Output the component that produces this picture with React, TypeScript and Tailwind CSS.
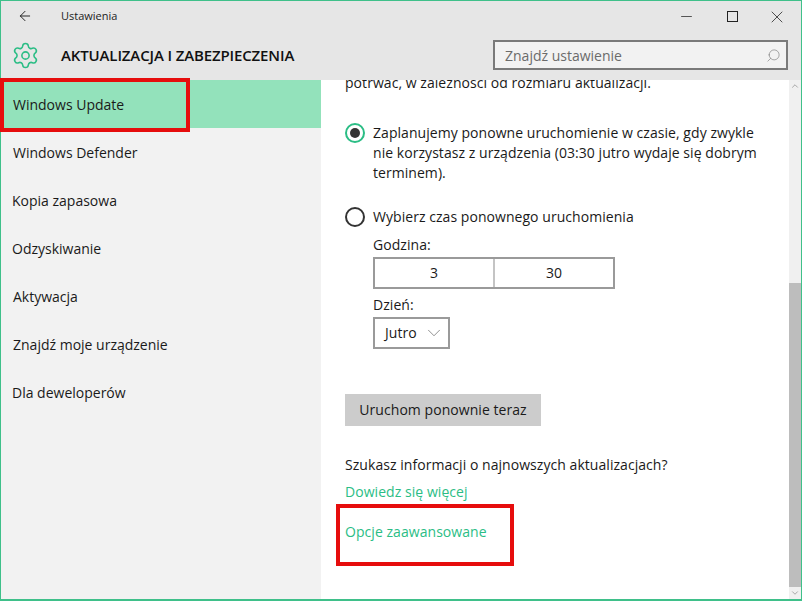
import { ArrowLeft, ChevronDown, ChevronUp, Minus, Search, Settings, X } from "lucide-react";

const menu = [
  { name: "Windows Update", active: true, pad: "pl-3" },
  { name: "Windows Defender", active: false, pad: "pl-3" },
  { name: "Kopia zapasowa", active: false, pad: "pl-[11px]" },
  { name: "Odzyskiwanie", active: false, pad: "pl-[11px]" },
  { name: "Aktywacja", active: false, pad: "pl-3" },
  { name: "Znajdź moje urządzenie", active: false, pad: "pl-3" },
  { name: "Dla deweloperów", active: false, pad: "pl-[11px]" },
];

export default function App() {
  return (
    <div className="relative w-[802px] h-[602px] overflow-hidden bg-white font-['Open_Sans','Noto_Sans',sans-serif] text-[14px] text-[#1a1a1a]">
      <div className="flex flex-col h-[601px] border border-[#3fc08a] border-b-2">
        {/* top bar */}
        <div className="h-[79px] shrink-0 bg-[#e6e6e6] flex flex-col">
          <div className="h-[31px] flex items-center">
            <div className="w-[60px] pl-4 shrink-0 mb-[1px]">
              <ArrowLeft size={16} strokeWidth={1.4} />
            </div>
            <span className="text-[11px] text-[#222]">Ustawienia</span>
            <div className="ml-auto flex items-center">
              <div className="w-[46px] flex justify-center"><Minus size={17} strokeWidth={1} /></div>
              <div className="w-[46px] flex justify-center"><div className="w-[11px] h-[11px] border border-[#222]" /></div>
              <div className="w-[46px] flex justify-center pr-[2px]"><X size={20} strokeWidth={0.9} /></div>
            </div>
          </div>
          <div className="flex items-center h-[48px] pb-[1px]">
            <div className="w-[60px] pl-[10px] shrink-0 text-[#2bbd85]">
              <Settings size={29} strokeWidth={1.3} />
            </div>
            <span className="text-[15px] font-semibold tracking-[-0.13px] text-[#111]">AKTUALIZACJA I ZABEZPIECZENIA</span>
            <div className="ml-auto mr-[13px] mb-[1px] w-[295px] h-[30px] border-2 border-[#7a7a7a] bg-[#f2f2f2] flex items-center pl-[10px] pr-[5px]">
              <span className="text-[14px] text-[#6b6b6b]">Znajdź ustawienie</span>
              <Search size={15} strokeWidth={1} className="ml-auto text-[#777] -scale-x-100" />
            </div>
          </div>
        </div>

        <div className="flex flex-1 min-h-0">
          {/* sidebar */}
          <div className="w-[320px] shrink-0 bg-[#f2f2f2]">
            {menu.map((item) => (
              <div
                key={item.name}
                className={`h-12 flex items-center ${item.pad} ${item.active ? "bg-[#93e2bb]" : ""}`}
              >
                {item.name}
              </div>
            ))}
          </div>

          {/* content */}
          <div className="flex-1 min-w-0 overflow-hidden pl-6 pr-8 relative">
            <div className="-mt-[7px] leading-5 tracking-[0.05px]">
              <p>potrwać, w zależności od rozmiaru aktualizacji.</p>

              <div className="flex mt-[30px]">
                <div className="w-5 h-5 rounded-full border-2 border-[#2bbd85] flex items-center justify-center shrink-0">
                  <div className="w-[10px] h-[10px] rounded-full bg-[#333]" />
                </div>
                <p className="ml-[8px] w-[400px]">
                  Zaplanujemy ponowne uruchomienie w czasie, gdy zwykle nie korzystasz z urządzenia (03:30 jutro wydaje się dobrym terminem).
                </p>
              </div>

              <div className="flex mt-6">
                <div className="w-5 h-5 rounded-full border-2 border-[#333] shrink-0" />
                <p className="ml-[8px]">Wybierz czas ponownego uruchomienia</p>
              </div>

              <div className="ml-7">
                <p className="mt-[8px]">Godzina:</p>
                <div className="mt-[2px] w-[242px] h-8 border-2 border-[#9a9a9a] flex">
                  <div className="w-[120px] border-r-2 border-[#c4c4c4] flex items-center justify-center">3</div>
                  <div className="flex-1 flex items-center justify-center">30</div>
                </div>
                <p className="mt-[6px]">Dzień:</p>
                <div className="mt-[2px] w-[77px] h-8 border-2 border-[#9a9a9a] flex items-center pl-[10px]">
                  <span>Jutro</span>
                  <ChevronDown size={22} strokeWidth={0.7} className="ml-[6px] text-[#555]" />
                </div>
              </div>

              <div className="mt-[45px] w-[196px] h-8 bg-[#cccccc] flex items-center justify-center">
                Uruchom ponownie teraz
              </div>

              <p className="mt-[29px]">Szukasz informacji o najnowszych aktualizacjach?</p>
              <p className="mt-[7px] text-[#2bbd85]">Dowiedz się więcej</p>
              <p className="mt-5 text-[#2bbd85]">Opcje zaawansowane</p>
            </div>

            {/* scrollbar */}
            <div className="absolute top-0 bottom-0 right-0 w-3 bg-[#f0f0f0] flex flex-col">
              <div className="h-3 flex items-center justify-center text-[#999]"><ChevronUp size={10} strokeWidth={2} /></div>
              <div className="h-[191px]" />
              <div className="flex-1 bg-[#bdbdbd]" />
              <div className="h-3 flex items-center justify-center text-[#999]"><ChevronDown size={10} strokeWidth={2} /></div>
            </div>
          </div>
        </div>
      </div>

      {/* red annotations */}
      <div className="absolute left-0 top-[78px] w-[190px] h-[54px] border-[4px] border-[#e60d0d]" />
      <div className="absolute left-[336px] top-[504px] w-[178px] h-[62px] border-[4px] border-[#e60d0d]" />
    </div>
  );
}
